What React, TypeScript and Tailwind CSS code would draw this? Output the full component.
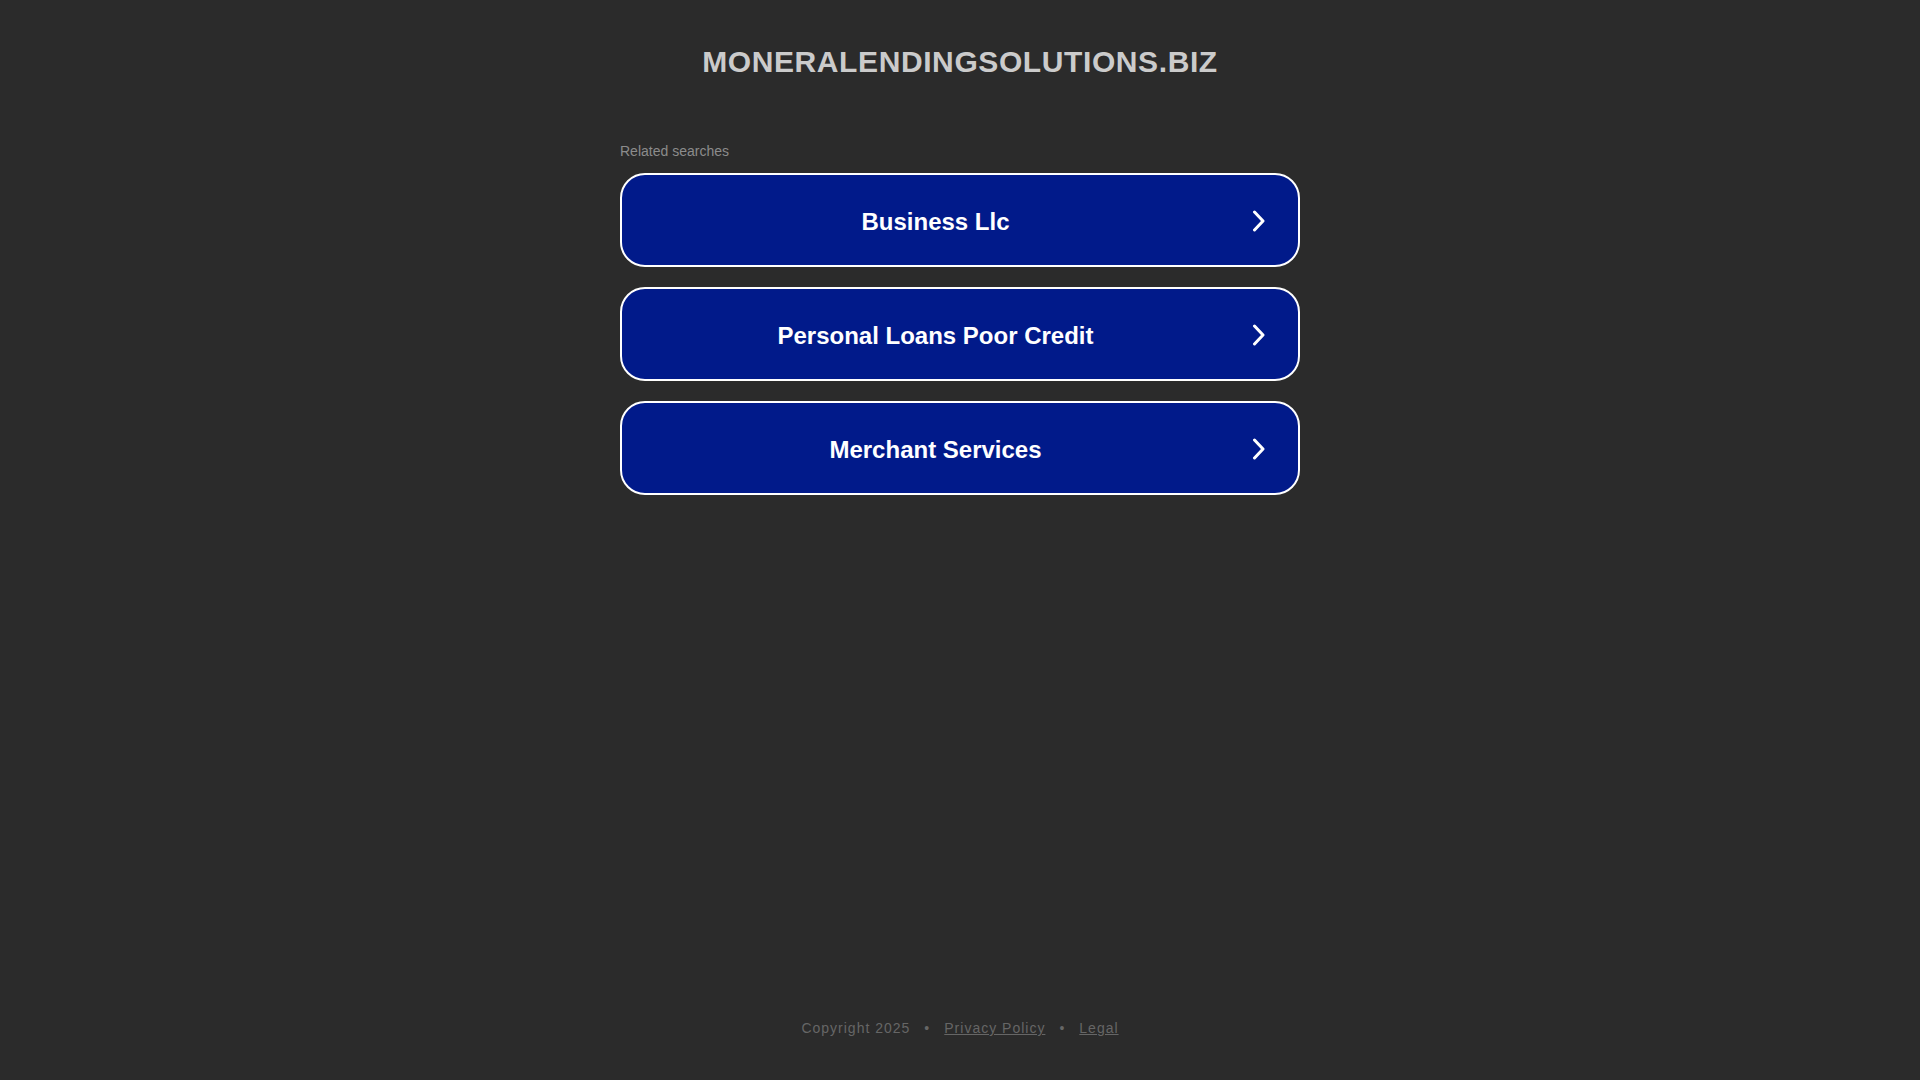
const searches = ["Business Llc", "Personal Loans Poor Credit", "Merchant Services"];

function Chevron() {
  return (
    <svg width="14" height="22" viewBox="0 0 14 22" fill="none" className="mt-[2px]">
      <path d="M2.5 2 L11 11 L2.5 20" stroke="white" strokeWidth="3" strokeLinecap="round" strokeLinejoin="round" />
    </svg>
  );
}

export default function App() {
  return (
    <div className="min-h-screen bg-[#2b2b2b] flex flex-col items-center font-['Liberation_Sans',Arial,sans-serif]">
      <h1 className="mt-[45px] text-[30px] leading-[34px] font-bold tracking-[0.6px] text-[#cbcbcb] uppercase">
        moneralendingsolutions.biz
      </h1>

      <div className="w-[680px] mt-[64px]">
        <p className="text-[14px] leading-[16px] text-[#8c8c8c]">Related searches</p>
        <div className="mt-[14px] flex flex-col gap-[20px]">
          {searches.map((s) => (
            <a
              key={s}
              href="#"
              className="h-[94px] flex items-center rounded-[25px] border-2 border-white bg-[#011a8a] pl-[20px] pr-[32px]"
            >
              <span className="flex-1 mr-[23px] pt-[4px] text-center text-[24px] font-bold text-white">{s}</span>
              <Chevron />
            </a>
          ))}
        </div>
      </div>

      <div className="flex-1" />

      <footer className="mb-[41px] flex items-center gap-[14px] text-[14px] tracking-[1px] text-[#666666]">
        <span>Copyright 2025</span>
        <span>•</span>
        <a href="#" className="underline">Privacy Policy</a>
        <span>•</span>
        <a href="#" className="underline">Legal</a>
      </footer>
    </div>
  );
}
